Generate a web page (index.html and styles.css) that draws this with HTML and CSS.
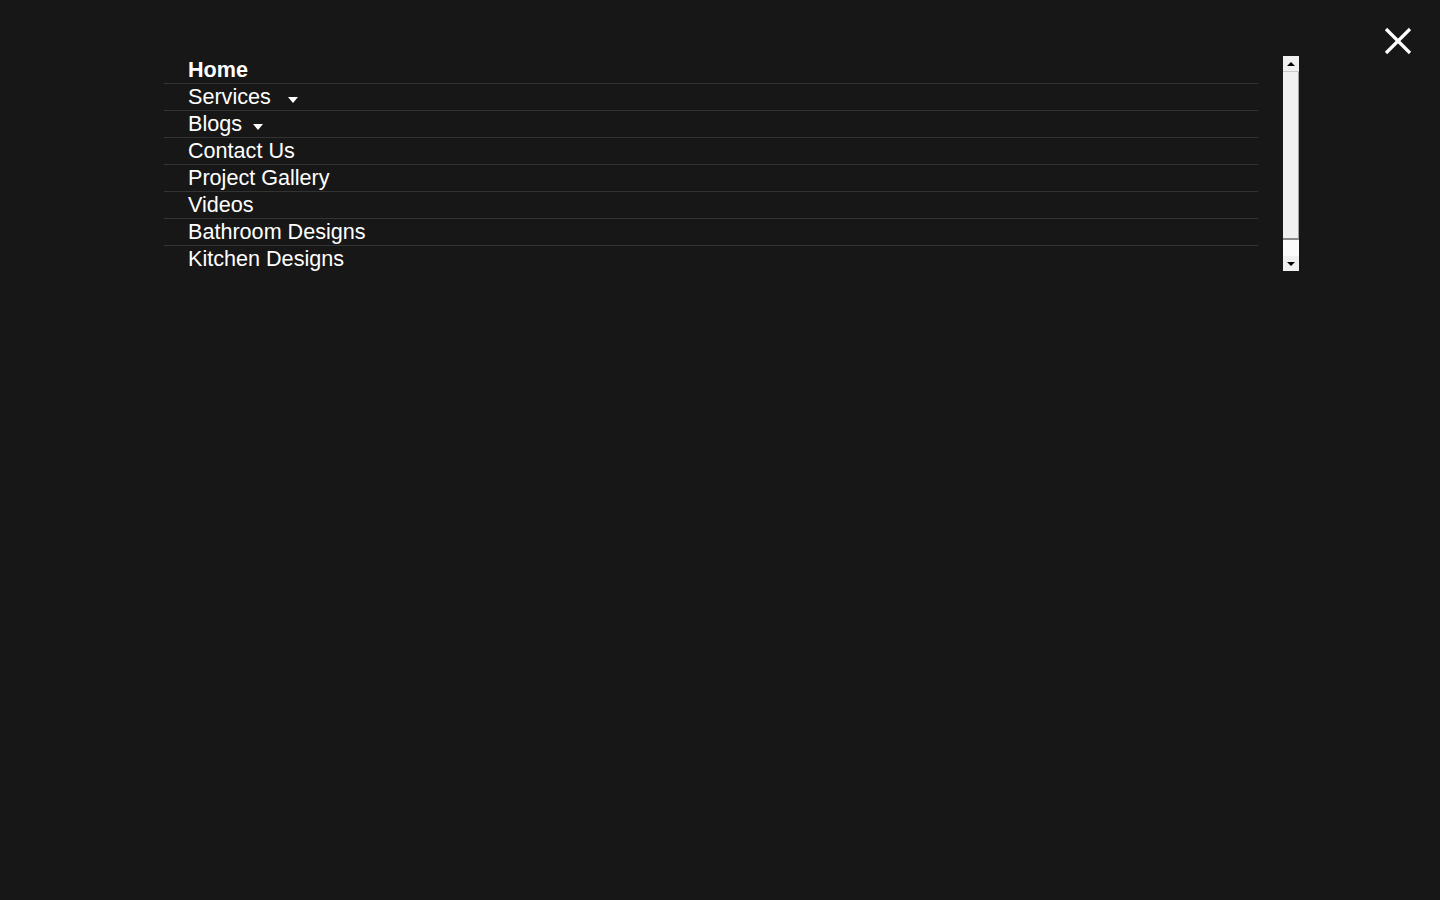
FILE: index.html
```html
<!DOCTYPE html>
<html lang="en">
  <head>
    <meta charset="UTF-8" />
    <meta name="viewport" content="width=device-width, initial-scale=1.0" />
    <title>Menu</title>
    <link rel="stylesheet" href="styles.css">
  </head>
  <body>
    <button class="close-button" aria-label="Close">
      <svg width="28" height="28" viewBox="0 0 28 28">
        <line x1="2" y1="2" x2="26" y2="26" stroke="#fff" stroke-width="3.2" />
        <line x1="26" y1="2" x2="2" y2="26" stroke="#fff" stroke-width="3.2" />
      </svg>
    </button>

    <div class="menu-panel">
      <ul class="menu-list">
        <li class="menu-item active"><a href="#">Home</a></li>
        <li class="menu-item"><a href="#">Services&nbsp;<span class="drop-arrow"></span></a></li>
        <li class="menu-item"><a href="#">Blogs<span class="drop-arrow"></span></a></li>
        <li class="menu-item"><a href="#">Contact Us</a></li>
        <li class="menu-item"><a href="#">Project Gallery</a></li>
        <li class="menu-item"><a href="#">Videos</a></li>
        <li class="menu-item"><a href="#">Bathroom Designs</a></li>
        <li class="menu-item"><a href="#">Kitchen Designs</a></li>
      </ul>

      <!-- old style scrollbar -->
      <div class="scrollbar">
        <div class="scroll-btn"><span class="tri-up"></span></div>
        <div class="scroll-thumb"></div>
        <div class="scroll-track"></div>
        <div class="scroll-btn"><span class="tri-down"></span></div>
      </div>
    </div>
  </body>
</html>
```

FILE: styles.css
```css
body {
  margin: 0;
  background-color: #171717;
  font-family: "Liberation Sans", Arial, sans-serif;
  color: #fff;
}
.close-button {
  position: absolute;
  top: 27px;
  right: 28px;
  padding: 0;
  border: none;
  background: none;
  cursor: pointer;
  line-height: 0;
}
.menu-panel {
  display: flex;
  align-items: flex-start;
  gap: 25px;
  margin-left: 164px;
  padding-top: 56px;
  width: 1136px;
}
.menu-list {
  list-style: none;
  margin: 1px 0 0;
  padding: 0;
  width: 1094px;
  height: 214px;
  overflow: hidden;
}
.menu-item {
  border-bottom: 1px solid #333;
}
.menu-item a {
  display: block;
  padding-left: 24px;
  font-size: 21.6px;
  line-height: 26px;
  height: 26px;
  color: #fff;
  text-decoration: none;
}
.menu-item.active a {
  font-weight: bold;
}
.drop-arrow {
  display: inline-block;
  margin-left: 11px;
  margin-bottom: 1px;
  border-left: 5px solid transparent;
  border-right: 5px solid transparent;
  border-top: 6px solid #fff;
}

.scrollbar {
  display: flex;
  flex-direction: column;
  width: 16px;
  height: 215px;
  background-color: #f7f7f7;
}
.scroll-btn {
  display: flex;
  justify-content: center;
  align-items: center;
  height: 16px;
  background-color: #f0f0f0;
  border-bottom: 1px solid #c8c8c8;
  box-sizing: border-box;
}
.scroll-btn:last-child {
  border-bottom: none;
  border-top: 1px solid #fafafa;
}
.tri-up {
  border-left: 4px solid transparent;
  border-right: 4px solid transparent;
  border-bottom: 4px solid #000;
}
.tri-down {
  border-left: 4px solid transparent;
  border-right: 4px solid transparent;
  border-top: 4px solid #000;
}
.scroll-thumb {
  height: 168px;
  background-color: #f0f0f0;
  border-right: 1px solid #a0a0a0;
  border-bottom: 2px solid #8a8a8a;
  box-sizing: border-box;
}
.scroll-track {
  flex: 1;
  background-color: #fbfbfb;
}
```
